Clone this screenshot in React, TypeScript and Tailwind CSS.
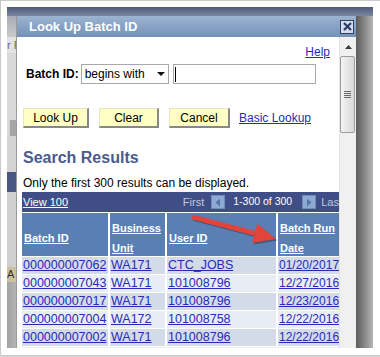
import React from "react";

const rows = [
  ["000000007062", "WA171", "CTC_JOBS", "01/20/2017"],
  ["000000007043", "WA171", "101008796", "12/27/2016"],
  ["000000007017", "WA171", "101008796", "12/23/2016"],
  ["000000007004", "WA172", "101008758", "12/22/2016"],
  ["000000007002", "WA171", "101008796", "12/22/2016"],
  ["000000006998", "WA171", "101008796", "12/21/2016"],
];

function NavButton({ dir, className }: { dir: "left" | "right"; className?: string }) {
  return (
    <div
      className={`w-[14px] h-[14px] bg-[#8eaad1] border border-[#6f8dbb] flex items-center justify-center ${className ?? ""}`}
    >
      <svg width="6" height="9" viewBox="0 0 6 9">
        {dir === "left" ? (
          <path d="M5 0.5V8.5L0.5 4.5Z" fill="#5676ad" />
        ) : (
          <path d="M1 0.5V8.5L5.5 4.5Z" fill="#5676ad" />
        )}
      </svg>
    </div>
  );
}

function LeftStrip() {
  return (
    <div className="w-[9px] shrink-0 flex flex-col overflow-hidden">
      <div className="h-[21px] bg-gradient-to-b from-[#a9acb8] to-[#cacaca]" />
      <div className="h-[16px] bg-[#e2e2e2] text-[11px] leading-[16px] text-[#6a6a6a] whitespace-nowrap">
        r P
      </div>
      <div className="h-[67px] bg-[#d9d9d9]" />
      <div className="h-[16px] bg-[#d9d9d9] pl-[2px]">
        <div className="h-full bg-[#a6a6a6] border-l border-[#cfcfcf]" />
      </div>
      <div className="h-[36px] bg-[#d4d4d4]" />
      <div className="h-[20px] bg-[#4a5581]" />
      <div className="h-[75px] bg-[#cfcfcf]" />
      <div className="h-[15px] bg-[#cbc29c] text-[11px] leading-[15px] text-[#333] whitespace-nowrap">
        A
      </div>
      <div className="flex-1 bg-gradient-to-r from-[#a2a2a2] to-[#b4b4b4]" />
    </div>
  );
}

function Scrollbar() {
  return (
    <div className="w-[17px] shrink-0 bg-[#f0f0f0] border-l border-[#e4e4e4] flex flex-col">
      <div className="h-[19px] flex items-center justify-center">
        <svg width="7" height="4" viewBox="0 0 7 4">
          <path d="M0 4L3.5 0L7 4Z" fill="#3a3a3a" />
        </svg>
      </div>
      <div className="w-[15px] h-[77px] rounded-[2px] border border-[#9c9c9c] bg-gradient-to-r from-[#f4f4f4] to-[#d8d8d8] flex flex-col items-center justify-center gap-[1px]">
        <div className="w-[7px] h-[1px] bg-[#6a6a6a]" />
        <div className="w-[7px] h-[1px] bg-[#6a6a6a]" />
        <div className="w-[7px] h-[1px] bg-[#6a6a6a]" />
        <div className="w-[7px] h-[1px] bg-[#6a6a6a]" />
      </div>
    </div>
  );
}

function HeaderCell({ lines }: { lines: string[] }) {
  return (
    <div className="h-[43px] bg-[#5a80b3] pl-[2px] pt-[6px] flex flex-col justify-center gap-[4px]">
      {lines.map((l) => (
        <span key={l} className="text-white font-bold text-[11px] leading-4 underline whitespace-nowrap">
          {l}
        </span>
      ))}
    </div>
  );
}

function ResultsTable() {
  return (
    <div className="w-[326px] ml-[5px] mt-[2px] bg-white flex flex-col gap-[1px]">
      <div className="h-[20px] bg-[#3f4e87] flex items-center pl-[1px] pr-[6px] text-[11px] whitespace-nowrap">
        <span className="text-white underline">View 100</span>
        <span className="ml-auto text-[#c2c8da]">First</span>
        <NavButton dir="left" className="ml-[7px]" />
        <span className="ml-[8px] text-white text-[10.5px]">1-300 of 300</span>
        <NavButton dir="right" className="ml-[10px]" />
        <span className="ml-[5px] text-[#c2c8da]">Last</span>
      </div>
      <div className="grid grid-cols-[86px_55px_109px_70px] gap-x-[2px] gap-y-[1px]">
        <HeaderCell lines={["Batch ID"]} />
        <HeaderCell lines={["Business", "Unit"]} />
        <HeaderCell lines={["User ID"]} />
        <HeaderCell lines={["Batch Run", "Date"]} />
        {rows.map((r, i) =>
          r.map((c, j) => (
            <div
              key={`${i}-${j}`}
              className={`h-[17px] pl-[1px] overflow-hidden whitespace-nowrap leading-[17px] text-[#2a2ab8] underline ${
                j === 3 ? "text-[12px]" : "text-[12.5px]"
              } ${i % 2 === 0 ? "bg-[#d3dbe8]" : "bg-[#e8edf5]"}`}
            >
              {c}
            </div>
          ))
        )}
      </div>
    </div>
  );
}

function Dialog() {
  return (
    <div className="w-[340px] shrink-0 flex flex-col border-l border-[#9a9a9a]">
      <div className="h-[21px] shrink-0 flex items-center justify-between bg-gradient-to-b from-[#9cb4d0] to-[#7391b9] pl-[12px] pr-[2px]">
        <span className="text-white font-bold text-[13px] leading-4">Look Up Batch ID</span>
        <div className="w-[14px] h-[14px] border border-[#2f3f66] bg-[#d2dcec] flex items-center justify-center">
          <svg width="9" height="9" viewBox="0 0 9 9">
            <path d="M1 1L8 8M8 1L1 8" stroke="#2b3a63" strokeWidth="2.2" />
          </svg>
        </div>
      </div>
      <div className="flex flex-1 min-h-0 bg-white">
        <div className="w-[322px] overflow-hidden">
          <div className="flex justify-end pr-[9px] pt-[7px] text-[12px] leading-4">
            <span className="text-[#2a2ab8] underline">Help</span>
          </div>
          <div className="mt-[4px] h-[20px] flex items-center pl-[9px] text-[12px]">
            <span className="font-bold text-black">Batch ID:</span>
            <div className="ml-[2px] w-[88px] h-[20px] border border-[#a8a8a8] bg-white flex items-center pl-[3px] pr-[3px]">
              <span className="text-black">begins with</span>
              <svg className="ml-auto" width="8" height="4" viewBox="0 0 8 4">
                <path d="M0 0H8L4 4Z" fill="#111" />
              </svg>
            </div>
            <div className="ml-[4px] w-[143px] h-[20px] border border-[#a8a8a8] bg-white flex items-center pl-[1px]">
              <div className="w-[1px] h-[15px] bg-black" />
            </div>
          </div>
          <div className="mt-[24px] flex items-center pl-[6px] text-[12px]">
            <button className="w-[66px] h-[20px] bg-[#ffffc4] border-t border-l border-[#e6e6c4] border-r-2 border-b-2 border-r-[#888] border-b-[#888] text-black">
              Look Up
            </button>
            <button className="ml-[10px] w-[60px] h-[20px] bg-[#ffffc4] border-t border-l border-[#e6e6c4] border-r-2 border-b-2 border-r-[#888] border-b-[#888] text-black">
              Clear
            </button>
            <button className="ml-[10px] w-[61px] h-[20px] bg-[#ffffc4] border-t border-l border-[#e6e6c4] border-r-2 border-b-2 border-r-[#888] border-b-[#888] text-black">
              Cancel
            </button>
            <span className="ml-[9px] text-[#2a2ab8] underline">Basic Lookup</span>
          </div>
          <div className="mt-[20px] pl-[6px] text-[16px] leading-5 font-bold text-[#4c5a8e]">Search Results</div>
          <div className="mt-[8px] pl-[6px] text-[12px] leading-[14px] text-black whitespace-nowrap">
            Only the first 300 results can be displayed.
          </div>
          <ResultsTable />
        </div>
        <Scrollbar />
      </div>
    </div>
  );
}

function Arrow() {
  return (
    <svg className="absolute left-[185px] top-[205px]" width="100" height="50" viewBox="0 0 100 50">
      <g transform="translate(1.5 1.5)" opacity="0.3">
        <line x1="9" y1="12.3" x2="71" y2="28.7" stroke="#000" strokeWidth="5" strokeLinecap="round" />
        <path d="M91 34L67.2 38L72.3 18.7Z" fill="#000" />
      </g>
      <line x1="9" y1="12.3" x2="71" y2="28.7" stroke="#e2433a" strokeWidth="5" strokeLinecap="round" />
      <path d="M91 34L67.2 38L72.3 18.7Z" fill="#e2433a" />
    </svg>
  );
}

export default function App() {
  return (
    <div className="w-[380px] h-[357px] bg-white overflow-hidden relative font-['Liberation_Sans',Arial,sans-serif]">
      <div className="w-[386px] h-[356px] border border-[#c9c9c9] bg-white pt-[6px] pl-[6px] shadow-[0_1px_2px_rgba(0,0,0,0.25)]">
        <div className="w-[366px] h-[341px] flex flex-col overflow-hidden">
          <div className="h-[9px] shrink-0 bg-gradient-to-b from-[#4f5b7b] to-[#7a86a1]" />
          <div className="flex flex-1 min-h-0">
            <LeftStrip />
            <Dialog />
            <div className="w-[17px] shrink-0 bg-gradient-to-r from-[#5c5c5c] to-[#b6b6b6]" />
          </div>
        </div>
      </div>
      <Arrow />
    </div>
  );
}
